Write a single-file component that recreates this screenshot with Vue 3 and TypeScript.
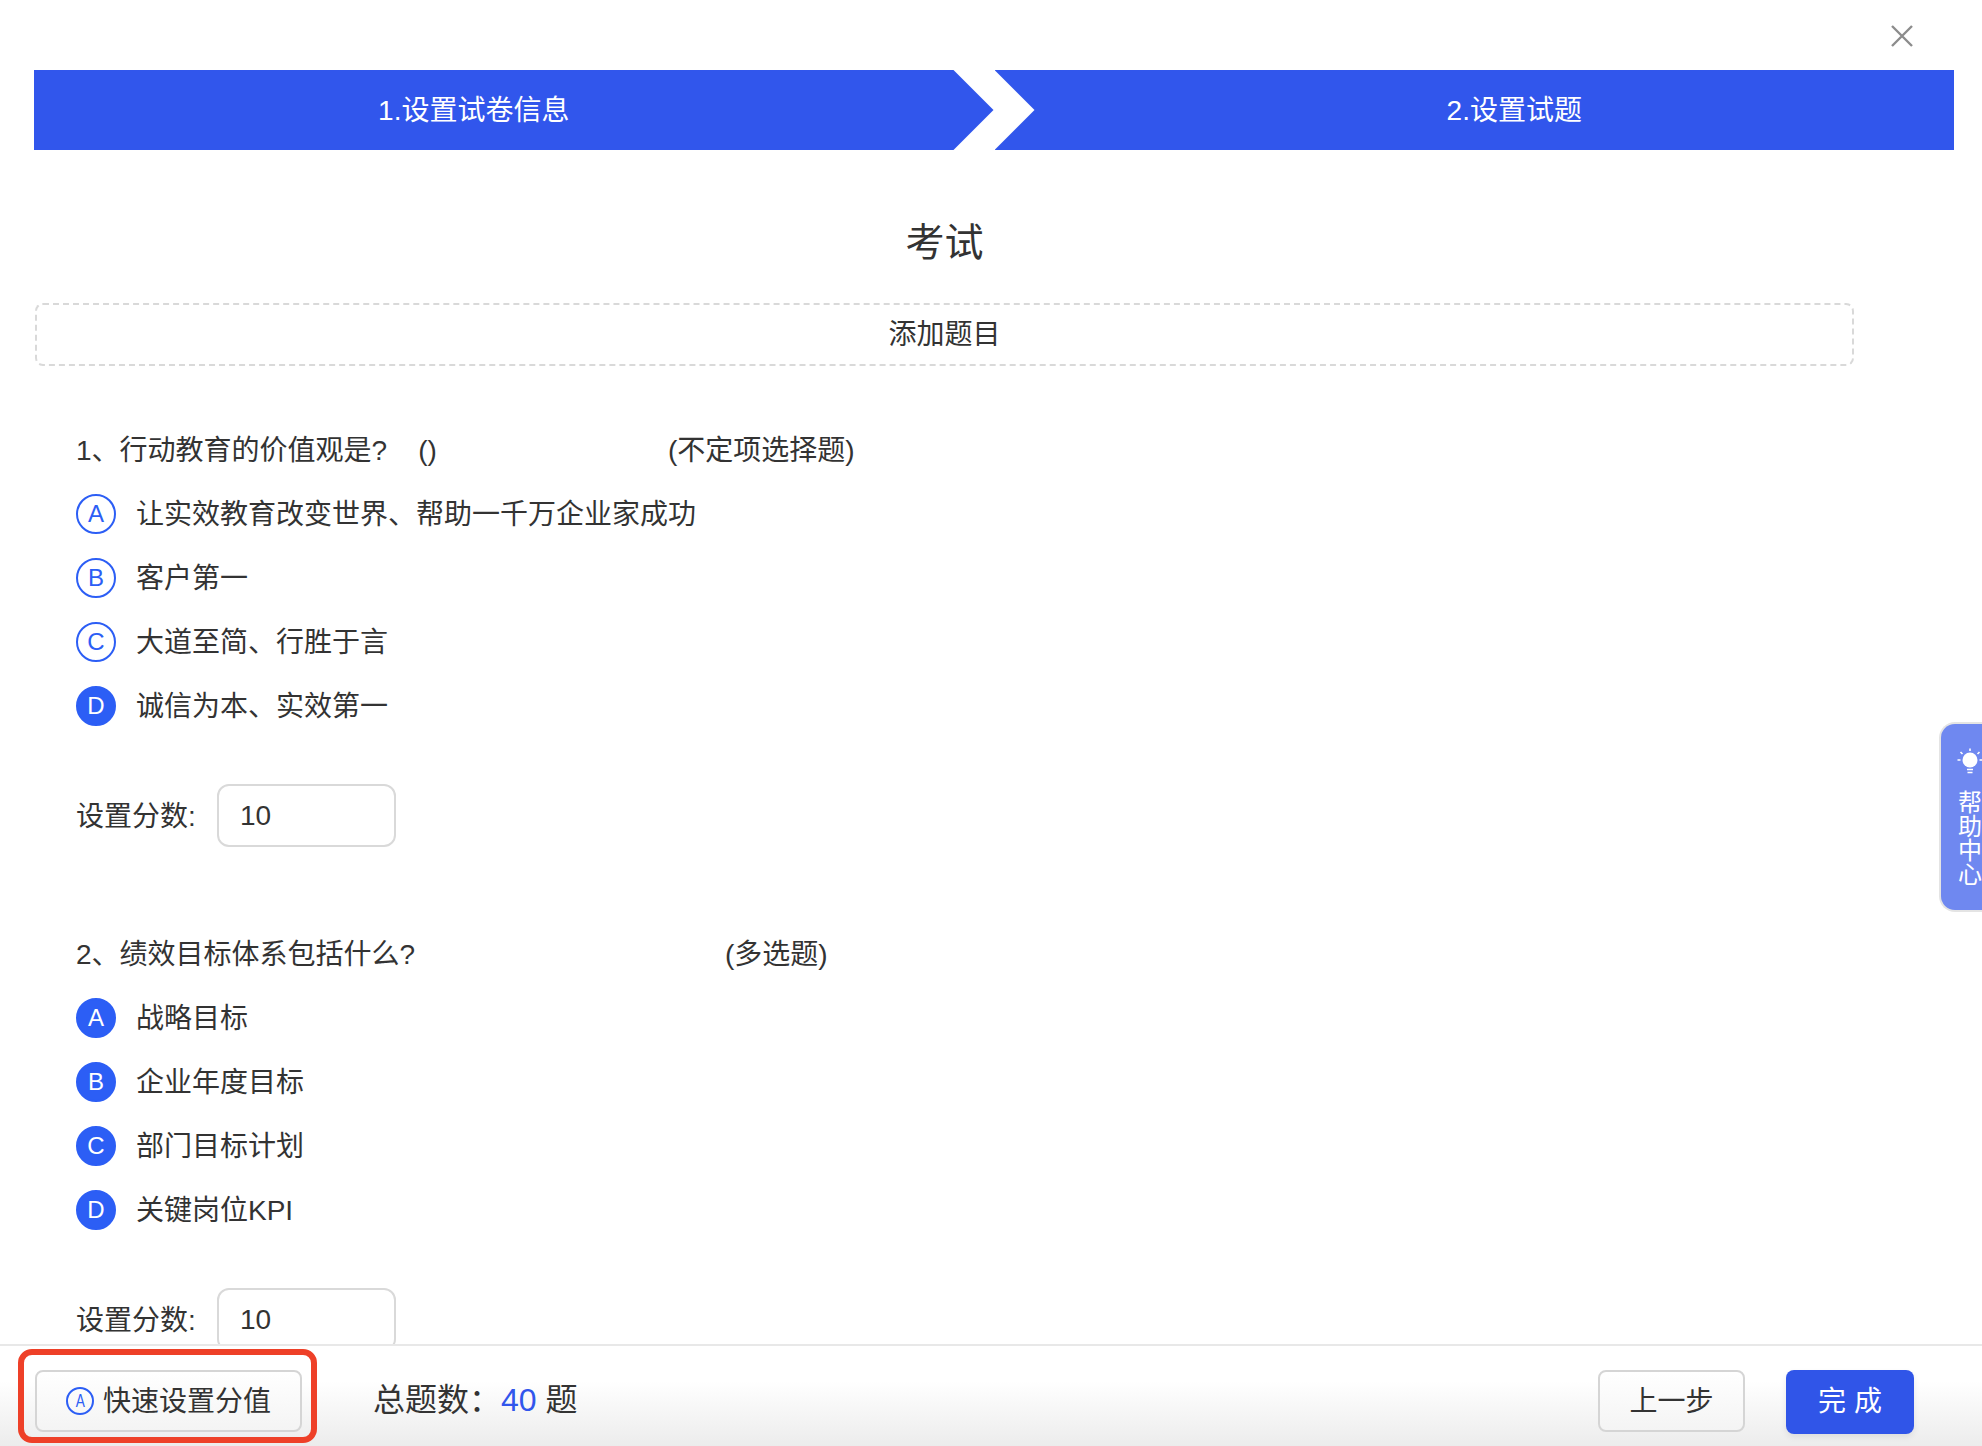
<script setup lang="ts">
interface Option {
  key: string
  text: string
  picked: boolean
}

interface Question {
  title: string
  kind: string
  titleWidth: number
  score: number
  options: Option[]
}

const questions: Question[] = [
  {
    title: '1、行动教育的价值观是?    ()',
    kind: '(不定项选择题)',
    titleWidth: 592,
    score: 10,
    options: [
      { key: 'A', text: '让实效教育改变世界、帮助一千万企业家成功', picked: false },
      { key: 'B', text: '客户第一', picked: false },
      { key: 'C', text: '大道至简、行胜于言', picked: false },
      { key: 'D', text: '诚信为本、实效第一', picked: true },
    ],
  },
  {
    title: '2、绩效目标体系包括什么?',
    kind: '(多选题)',
    titleWidth: 649,
    score: 10,
    options: [
      { key: 'A', text: '战略目标', picked: true },
      { key: 'B', text: '企业年度目标', picked: true },
      { key: 'C', text: '部门目标计划', picked: true },
      { key: 'D', text: '关键岗位KPI', picked: true },
    ],
  },
]
</script>

<template>
  <div class="page">
    <main class="content">
      <div class="top-bar">
        <svg class="close" width="24" height="24" viewBox="0 0 24 24">
          <path d="M2 2 L22 22 M22 2 L2 22" stroke="#8c8c8c" stroke-width="2.4" fill="none" />
        </svg>
      </div>

      <div class="steps">
        <div class="step step-first">1.设置试卷信息</div>
        <div class="step step-second">2.设置试题</div>
      </div>

      <h1 class="paper-title">考试</h1>
      <div class="add-question">添加题目</div>

      <section v-for="q in questions" :key="q.title" class="question">
        <div class="question-head">
          <span class="question-title" :style="{ width: q.titleWidth + 'px' }">{{ q.title }}</span>
          <span>{{ q.kind }}</span>
        </div>
        <ul class="options">
          <li v-for="opt in q.options" :key="opt.key" class="option">
            <span class="badge" :class="{ picked: opt.picked }">{{ opt.key }}</span>
            <span class="nudge">{{ opt.text }}</span>
          </li>
        </ul>
        <div class="score-row">
          <label class="score-label nudge">设置分数:</label>
          <input class="score-input" :value="q.score" readonly />
        </div>
      </section>
    </main>

    <footer class="footer">
      <div class="quick-wrap">
        <button class="btn quick-btn">
          <span class="quick-icon"><span class="quick-letter">A</span></span>
          <span class="nudge">快速设置分值</span>
        </button>
      </div>
      <div class="total">总题数：<span class="total-num">40</span> 题</div>
      <button class="btn prev-btn"><span class="nudge">上一步</span></button>
      <button class="btn done-btn">完 成</button>
    </footer>

    <aside class="help">
      <svg class="help-icon" width="26" height="28" viewBox="0 0 26 28">
        <circle cx="13" cy="12" r="7.5" fill="#fff" />
        <path d="M10 21.5h6M10.5 24.5h5" stroke="#fff" stroke-width="1.6" fill="none" />
        <path
          d="M13 0.5v2.5M3.5 4l2 2M22.500 4l-2 2M0.500 12h3M22.500 12h3"
          stroke="#fff"
          stroke-width="1.6"
          fill="none"
        />
      </svg>
      <span class="help-text">帮助中心</span>
    </aside>
  </div>
</template>

<style scoped>
.page {
  position: relative;
  display: flex;
  flex-direction: column;
  height: 1446px;
  overflow: hidden;
  background: #fff;
  color: #333;
  font-family: 'Liberation Sans', 'Noto Sans CJK SC', sans-serif;
  font-size: 28px;
  line-height: 40px;
}

.nudge {
  display: block;
  padding-top: 2px;
}

.content {
  flex: 1;
  min-height: 0;
  overflow: hidden;
}

.top-bar {
  display: flex;
  justify-content: flex-end;
  height: 70px;
  padding: 24px 68px 0 0;
  box-sizing: border-box;
}

.steps {
  display: flex;
  gap: 1px;
  margin-left: 34px;
  width: 1920px;
}

.step {
  flex: 1;
  height: 80px;
  box-sizing: border-box;
  display: flex;
  align-items: center;
  justify-content: center;
  padding-top: 2px;
  background: #3156ec;
  color: #fff;
}

.step-first {
  padding-right: 80px;
  clip-path: polygon(0 0, calc(100% - 40px) 0, 100% 50%, calc(100% - 40px) 100%, 0 100%);
}

.step-second {
  padding-left: 80px;
  clip-path: polygon(0 0, 100% 0, 100% 100%, 0 100%, 40px 50%);
}

.paper-title {
  margin: 65px 0 32px 35px;
  width: 1819px;
  font-size: 39px;
  line-height: 56px;
  font-weight: 400;
  text-align: center;
}

.add-question {
  margin-left: 35px;
  width: 1819px;
  height: 63px;
  box-sizing: border-box;
  border: 2px dashed #d9d9d9;
  border-radius: 8px;
  display: flex;
  align-items: center;
  justify-content: center;
  margin-bottom: 64px;
}

.question {
  padding-left: 76px;
  margin-bottom: 87px;
}

.question-head {
  display: flex;
  padding-top: 1px;
  white-space: pre;
}

.question-title {
  flex: none;
}

.options {
  list-style: none;
  margin: 23px 0 0;
  padding: 0;
  display: flex;
  flex-direction: column;
  gap: 24px;
}

.option {
  display: flex;
  align-items: center;
  gap: 20px;
  height: 40px;
}

.badge {
  width: 40px;
  height: 40px;
  box-sizing: border-box;
  border: 2px solid #2c5ef5;
  border-radius: 50%;
  display: flex;
  align-items: center;
  justify-content: center;
  color: #2c5ef5;
  font-size: 24px;
}

.badge.picked {
  background: #2c5ef5;
  color: #fff;
}

.score-row {
  display: flex;
  align-items: center;
  margin-top: 58px;
}

.score-label {
  width: 141px;
}

.score-input {
  width: 179px;
  height: 63px;
  box-sizing: border-box;
  border: 2px solid #d9d9d9;
  border-radius: 12px;
  padding: 0 21px;
  color: #333;
  font: inherit;
  outline: none;
}

.footer {
  flex: none;
  height: 102px;
  box-sizing: border-box;
  display: flex;
  align-items: flex-start;
  padding: 24px 68px 0 35px;
  border-top: 2px solid #e8e8e8;
  background: linear-gradient(180deg, #fff 0%, #fff 35%, #ececec 100%);
}

.btn {
  height: 62px;
  box-sizing: border-box;
  border-radius: 8px;
  font: inherit;
  color: #333;
  cursor: pointer;
  background: linear-gradient(180deg, #fff 0%, #f4f4f4 100%);
  border: 2px solid #d5d5d5;
  padding: 0;
}

.quick-wrap {
  position: relative;
  flex: none;
}

/* red annotation frame around the button */
.quick-wrap::after {
  content: '';
  position: absolute;
  left: -17px;
  top: -21px;
  width: 299px;
  height: 94px;
  box-sizing: border-box;
  border: 6px solid #ee4028;
  border-radius: 14px;
  pointer-events: none;
}

.quick-btn {
  width: 267px;
  display: flex;
  align-items: center;
  justify-content: center;
  gap: 9px;
}

.quick-icon {
  width: 28px;
  height: 28px;
  box-sizing: border-box;
  border: 2px solid #2c5ef5;
  border-radius: 50%;
  display: flex;
  align-items: center;
  justify-content: center;
  color: #2c5ef5;
  font-size: 19px;
}

.quick-letter {
  transform: scaleX(0.72);
}

.total {
  margin: 2px 0 0 71px;
  font-size: 32px;
  line-height: 56px;
}

.total-num {
  color: #3156ec;
}

.prev-btn {
  margin-left: auto;
  width: 147px;
}

.done-btn {
  margin-left: 41px;
  width: 128px;
  height: 64px;
  border: 0;
  background: #3055e8;
  color: #fff;
  box-shadow: 0 3px 6px rgba(0, 0, 0, 0.08);
}

.help {
  position: absolute;
  right: 0;
  top: 722px;
  width: 43px;
  height: 190px;
  box-sizing: border-box;
  padding: 24px 0 0 16px;
  border: 2px solid #e4e4e4;
  border-right: 0;
  border-radius: 16px 0 0 16px;
  background: #6f88f0;
  color: #fff;
  display: flex;
  flex-direction: column;
  align-items: flex-start;
}

.help-icon {
  flex: none;
}

.help-text {
  margin: 15px 0 0 1px;
  width: 24px;
  font-size: 24px;
  line-height: 24px;
  text-align: center;
}
</style>

<style>
html,
body {
  margin: 0;
  background: #fff;
}
</style>
